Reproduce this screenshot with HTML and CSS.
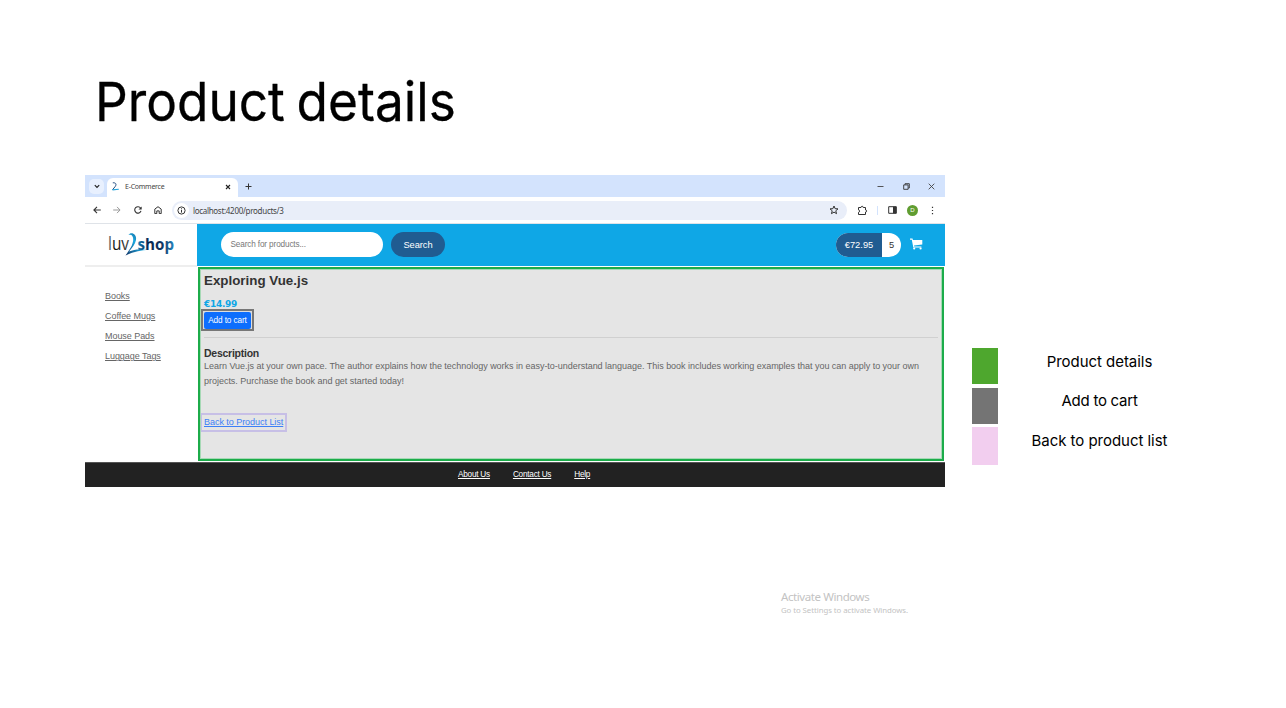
FILE: index.html
```html
<!DOCTYPE html>
<html lang="en">
<head>
<meta charset="utf-8">
<title>Product details</title>
<link rel="stylesheet" href="styles.css">
</head>
<body>
<main class="slide">
  <h1 class="title"><span>Product details</span></h1>
  <div class="content">
    <section class="browser">
      <div class="tabstrip">
        <div class="tab-search"><svg width="6" height="5" viewBox="0 0 6 5"><path d="M.8 1.2 3 3.4 5.2 1.2" fill="none" stroke="#222" stroke-width="1.2"/></svg></div>
        <div class="tab">
          <svg width="9" height="9" viewBox="0 0 9 9"><path d="M1.8 .8C5 .5 5.7 2.400 4.200 4.500L1.500 7.800" fill="none" stroke="#234d82" stroke-width="1"/><path d="M1.500 7.900 7.800 7.200" stroke="#26a5dd" stroke-width="1.100"/></svg>
          <span class="tab-name">E-Commerce</span>
          <svg class="tab-close" width="6" height="6" viewBox="0 0 6 6"><path d="M1 1 5 5M5 1 1 5" stroke="#222" stroke-width="1.100"/></svg>
        </div>
        <svg class="new-tab" width="7" height="7" viewBox="0 0 7 7"><path d="M3.500 .5v6M.5 3.500h6" stroke="#333" stroke-width="1"/></svg>
        <div class="window-buttons">
          <svg width="7" height="7" viewBox="0 0 7 7"><path d="M.5 3.500h6" stroke="#444" stroke-width=".9"/></svg>
          <svg width="7" height="7" viewBox="0 0 7 7"><path d="M.7 1.900h4.400v4.400H.7zM2 1.700V.7h4.300V5H5.300" fill="none" stroke="#333" stroke-width=".9"/></svg>
          <svg width="7" height="7" viewBox="0 0 7 7"><path d="M.7 .7l5.600 5.600M6.300 .7.7 6.300" stroke="#444" stroke-width=".9"/></svg>
        </div>
      </div>
      <div class="toolbar">
        <div class="nav">
          <svg width="8" height="8" viewBox="0 0 8 8"><path d="M7.800 4H1M4 .9.9 4 4 7.100" fill="none" stroke="#333" stroke-width="1.100"/></svg>
          <svg width="8" height="8" viewBox="0 0 8 8"><path d="M.2 4H7M4 .9 7.100 4 4 7.100" fill="none" stroke="#999" stroke-width="1"/></svg>
          <svg width="8" height="8" viewBox="0 0 8 8"><path d="M6.600 2.100A3.200 3.200 0 1 0 7 4.900" fill="none" stroke="#333" stroke-width="1.100"/><path d="M7.700 .4v3.200H4.500z" fill="#333"/></svg>
          <svg width="8" height="8" viewBox="0 0 8 8"><path d="M.8 3.100 4 .7l3.200 2.400v4.500H5.200V4.900H2.800v2.700H.8z" fill="none" stroke="#333" stroke-width="1"/></svg>
        </div>
        <div class="address">
          <span class="info"><svg width="9" height="9" viewBox="0 0 9 9"><circle cx="4.500" cy="4.500" r="3.600" fill="none" stroke="#333" stroke-width="1"/><path d="M4.500 4v2.600M4.500 2.300v1" stroke="#333" stroke-width="1"/></svg></span>
          <span class="url">localhost:4200/products/3</span>
          <svg class="star" width="10" height="10" viewBox="0 0 9 9"><path d="M4.500 .9 5.500 3.300l2.600.2-2 1.700.7 2.600-2.300-1.400-2.300 1.400.7-2.600-2-1.700 2.600-.2z" fill="none" stroke="#333" stroke-width=".9"/></svg>
        </div>
        <div class="tools">
          <svg width="11" height="11" viewBox="0 0 11 11"><path d="M1.500 2.500H4c0-1.700 2.200-1.700 2.200 0h2.300V5c1.700 0 1.700 2 0 2v2.500h-7V7.300c1.500 0 1.500-2.400 0-2.400z" fill="none" stroke="#333" stroke-width="1"/></svg>
          <i class="divider"></i>
          <svg width="9" height="8" viewBox="0 0 9 8"><path d="M.7 .7h7.600v6.600H.7z" fill="none" stroke="#333" stroke-width="1"/><path d="M5 .7h3.300v6.600H5z" fill="#333"/></svg>
          <b class="avatar">D</b>
          <svg class="dots" width="3" height="9" viewBox="0 0 3 9"><path d="M.9 .8h1.200V2H.9zM.9 3.900h1.200v1.200H.9zM.9 7h1.200v1.200H.9z" fill="#333"/></svg>
        </div>
      </div>
      <div class="app">
        <aside class="sidebar">
          <div class="brand">
            <svg width="70" height="30" viewBox="0 0 70 30">
              <defs>
                <linearGradient id="ink"><stop offset="0" stop-color="#777"/><stop offset=".3" stop-color="#111"/><stop offset="1" stop-color="#444"/></linearGradient>
                <linearGradient id="sea"><stop offset="0" stop-color="#1684bd"/><stop offset=".3" stop-color="#08254e"/><stop offset=".7" stop-color="#103866"/><stop offset="1" stop-color="#2487c3"/></linearGradient>
                <linearGradient id="swoosh" x1="0" y1="1" x2="1" y2="0"><stop offset="0" stop-color="#102f62"/><stop offset=".5" stop-color="#1ca9e0"/><stop offset="1" stop-color="#102f62"/></linearGradient>
              </defs>
              <text class="logo-luv" x="0" y="20" textLength="21" lengthAdjust="spacingAndGlyphs" fill="url(#ink)">luv</text>
              <path d="M20.500 5C22.500 1.500 29 3.500 28 10c-.7 4-4 8-7 11.500C26.500 19 32 19 41 20c-8 .2-14 1.200-23.500 5.500C22 19 24.800 15 25.200 10 25.400 6 23.500 4 20.500 5z" fill="url(#swoosh)"/>
              <text class="logo-shop" x="29.500" y="20" textLength="36.500" lengthAdjust="spacingAndGlyphs" fill="url(#sea)">shop</text>
            </svg>
          </div>
          <nav class="categories"><a>Books</a><a>Coffee Mugs</a><a>Mouse Pads</a><a>Luggage Tags</a></nav>
        </aside>
        <div class="page">
          <header class="app-header">
            <div class="search-field">Search for products...</div>
            <div class="search-button">Search</div>
            <div class="cart-status"><span class="total">€72.95</span><span class="count">5</span></div>
            <svg width="13" height="12" viewBox="0 0 13 12"><path d="M0 .6h2.500l.4 1.300h9.400v4.500L4 7.500l.2.900h7.200v1H3.300L1.800 1.700H0z" fill="#fff"/><circle cx="4.200" cy="10.500" r="1.100" fill="#fff"/><circle cx="10.600" cy="10.500" r="1.100" fill="#fff"/></svg>
          </header>
          <article class="product">
            <h2>Exploring Vue.js</h2>
            <div class="price">€14.99</div>
            <div class="cart-frame"><span>Add to cart</span></div>
            <hr>
            <h3>Description</h3>
            <p>Learn Vue.js at your own pace. The author explains how the technology works in easy-to-understand language. This book includes working examples that you can apply to your own<br>projects. Purchase the book and get started today!</p>
            <div class="back-frame"><a>Back to Product List</a></div>
          </article>
        </div>
      </div>
      <footer class="footer"><a>About Us</a><a>Contact Us</a><a>Help</a></footer>
    </section>
    <aside class="legend">
      <i class="swatch green"></i><span class="label l1">Product details</span>
      <i class="swatch gray"></i><span class="label l2">Add to cart</span>
      <i class="swatch pink"></i><span class="label l3">Back to product list</span>
    </aside>
  </div>
  <div class="watermark"><div class="wm-title">Activate Windows</div><div class="wm-text">Go to Settings to activate Windows.</div></div>
</main>
</body>
</html>
```
FILE: styles.css
```css
* { box-sizing: border-box; }
body { margin: 0; background: #fff; }
svg { display: block; flex: none; }
.slide { width: 1286px; height: 708px; overflow: hidden; padding: 67px 0 0 85px; }
.title { margin: 0; height: 108px; padding-left: 8px; font: 400 54px/70px Inter, sans-serif; color: #000; white-space: nowrap; }
.title span { display: inline-block; transform: scaleX(.951); transform-origin: 0 0; padding-left: 2px; word-spacing: -3px; -webkit-text-stroke: .3px #000; }
.content { display: flex; height: 312px; }
.browser { width: 860px; height: 312px; flex: none; font-family: "Liberation Sans", sans-serif; white-space: nowrap; }
.tabstrip { display: flex; align-items: center; height: 22px; padding-left: 4px; background: #d3e3fd; }
.tab-search { display: grid; place-items: center; width: 15px; height: 15px; border-radius: 5px; background: #e8f0fe; }
.tab { display: flex; align-items: center; width: 131px; height: 19px; margin: 3px 0 0 3px; padding: 0 7px 2px 4px; border-radius: 6px 6px 0 0; background: #fff; }
.tab-name { margin-left: 5px; font: 7px/12px "Noto Sans", sans-serif; letter-spacing: -.25px; color: #444; }
.tab-close { margin-left: auto; }
.new-tab { margin-left: 7px; }
.window-buttons { display: flex; gap: 18.500px; margin: 0 10px 0 auto; }
.toolbar { display: flex; align-items: center; height: 26px; padding-left: 8px; background: #fff; }
.nav { display: flex; gap: 12.300px; }
.address { display: flex; align-items: center; width: 675px; height: 19px; margin-left: 10px; padding: 0 8px 0 2px; border-radius: 10px; background: #e9eef9; }
.info { display: grid; place-items: center; width: 15px; height: 15px; border-radius: 50%; background: #fff; }
.url { margin-left: 4px; padding-top: 1px; font: 8px/12px "Noto Sans", sans-serif; letter-spacing: -.3px; color: #444; }
.star { margin-left: auto; }
.tools { display: flex; align-items: center; margin-left: 10px; }
.divider { width: 1px; height: 9px; margin: 0 10px 0 9px; background: #d3e3fd; }
.avatar { width: 11px; height: 11px; margin-left: 10px; border-radius: 50%; background: #609d31; color: #fff; font: 6px/11px "Liberation Sans", sans-serif; text-align: center; }
.dots { margin-left: 13px; }
.app { display: flex; height: 239px; border-top: 1px solid #dfe3e8; }
.sidebar { width: 112px; flex: none; }
.brand { height: 43px; padding: 6px 0 0 23px; border-bottom: 2px solid #eee; }
.logo-luv { font: 18px "Open Sans", sans-serif; }
.logo-shop { font: 700 16px "Open Sans", sans-serif; }
.categories { display: flex; flex-direction: column; align-items: flex-start; gap: 8.100px; padding: 23px 0 0 20px; font-size: 9px; line-height: 12px; letter-spacing: -.05px; color: #666; }
a { text-decoration: underline; }
.page { width: 748px; }
.app-header { display: flex; align-items: center; height: 42px; padding-left: 24px; background: #0fa7e6; }
.search-field { width: 162px; height: 25px; margin-top: -1px; padding-left: 9.500px; border-radius: 13px; background: #fff; font-size: 8.200px; line-height: 25px; letter-spacing: -.13px; color: #777; }
.search-button { width: 54px; height: 25px; margin: -1px 0 0 8px; border-radius: 13px; background: #205c91; color: #fff; font-size: 9.300px; line-height: 26px; letter-spacing: -.05px; text-align: center; }
.cart-status { display: flex; width: 65px; height: 24px; margin: -1px 9px 0 auto; border-radius: 12px; overflow: hidden; background: #fff; font-size: 9.300px; line-height: 24px; text-align: center; }
.app-header > svg { margin: -2px 22px 0 0; }
.total { width: 46px; background: #205c91; color: #fff; }
.count { width: 19px; color: #333; }
.product { width: 746px; height: 194px; margin: 1px 0 0 1px; padding: 3px 3px 0; border: 2px solid #1cac4a; outline: 1px solid #a6d9b5; outline-offset: -3px; background: #e5e5e5; color: #666; }
h2 { margin: 0 0 0 1px; font-size: 13.350px; line-height: 18px; color: #333; }
.price { margin: 9px 0 0 1px; font: 800 9px/11px "DejaVu Sans", sans-serif; letter-spacing: -.3px; color: #0fa7e6; }
.cart-frame { width: 53px; height: 22px; margin: -1px 0 0 -2px; padding: 1px 1px 0; border: 2px solid #777; background: #ddd; }
.cart-frame span { display: block; height: 17px; border-radius: 2px; background: #0d6efd; color: #fff; font-size: 8.200px; line-height: 17px; letter-spacing: -.1px; text-align: center; }
hr { height: 1px; margin: 6px 1px 0; border: 0; background: #d0d0d0; }
h3 { margin: 8px 0 0 1px; font-size: 10.500px; line-height: 14px; letter-spacing: -.25px; color: #333; }
.product p { margin: -1px 0 0 1px; font-size: 9px; line-height: 14.500px; letter-spacing: -.022px; }
.back-frame { width: 87px; height: 19px; margin: 25px 0 0 -3px; padding: 1px 0 0 2px; border: 2px solid #c7bfe6; color: #3c7ff7; font-size: 9px; line-height: 13px; letter-spacing: -.04px; }
.footer { display: flex; gap: 23px; height: 25px; padding-left: 373px; border-top: 1px solid #555; background: #222; color: #fff; font-size: 8.200px; line-height: 24px; letter-spacing: -.22px; }
.legend { display: grid; grid-template-columns: 26px 203px; grid-template-rows: 36px 36px 37px; row-gap: 4px; margin: 173px 0 0 27px; height: 117px; font: 15px/20px Inter, sans-serif; letter-spacing: -.04px; color: #000; }
.swatch.green { background: #4ea72e; }
.swatch.gray { background: #747474; }
.swatch.pink { background: #f2ceef; margin-top: -1px; }
.label { text-align: center; white-space: nowrap; padding-top: 4px; }
.l2, .l3 { padding-top: 3px; }
.l2 { letter-spacing: -.25px; }
.watermark { margin: 102px 0 0 696px; font-family: "Noto Sans", sans-serif; color: #c3c3c3; white-space: nowrap; }
.wm-title { font-size: 11.500px; line-height: 16px; letter-spacing: -.42px; }
.wm-text { font-size: 7.800px; line-height: 10px; letter-spacing: -.06px; }
```
